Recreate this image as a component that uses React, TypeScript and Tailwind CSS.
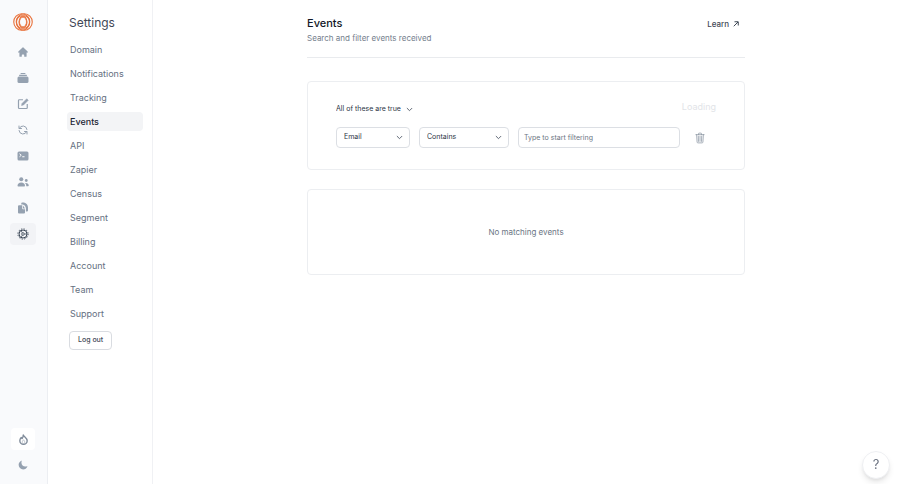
import React, { useState } from 'react';
import { HiHome, HiOutlineRefresh } from 'react-icons/hi';
import { IoMoon, IoTrashOutline } from 'react-icons/io5';
import clsx from 'clsx';

type IconProps = { className?: string };

function StackIcon({ className }: IconProps) {
  return (
    <svg viewBox="0 0 24 24" className={className} fill="currentColor" aria-hidden="true">
      <rect x="7" y="2" width="10" height="2" rx="1" />
      <rect x="4" y="5.5" width="16" height="2.4" rx="1.2" />
      <path d="M4 9h16a3 3 0 0 1 3 3v7a3 3 0 0 1-3 3H4a3 3 0 0 1-3-3v-7a3 3 0 0 1 3-3z" />
    </svg>
  );
}

function EditIcon({ className }: IconProps) {
  return (
    <svg viewBox="0 0 24 24" className={className} fill="none" stroke="currentColor" strokeWidth="2.4" strokeLinejoin="round" aria-hidden="true">
      <path d="M12 3.5H4.5A1.5 1.5 0 0 0 3 5v14.5A1.5 1.5 0 0 0 4.5 21H19a1.5 1.5 0 0 0 1.5-1.5V12" />
      <path d="M9 15l1-4 9.5-9.5 3 3L13 14z" fill="currentColor" strokeWidth="1" />
    </svg>
  );
}

function TerminalIcon({ className }: IconProps) {
  return (
    <svg viewBox="0 0 24 24" className={className} aria-hidden="true">
      <rect x="1" y="3" width="22" height="18" rx="3" fill="currentColor" />
      <path d="M5 7.5l3.5 3L5 13.5M10.5 13.5H15" fill="none" stroke="#fff" strokeWidth="2" />
    </svg>
  );
}

function PeopleIcon({ className }: IconProps) {
  return (
    <svg viewBox="0 0 24 24" className={className} fill="currentColor" aria-hidden="true">
      <circle cx="8.5" cy="6.5" r="4" />
      <path d="M1 19.5C1 15.5 4 13 8.5 13s7.5 2.5 7.5 6.5c0 1-.6 1.5-1.5 1.5h-12C1.6 21 1 20.500 1 19.500z" />
      <circle cx="18.5" cy="9" r="2.8" />
      <path d="M16 14.200c4-.9 7.500 1.300 7.500 5 0 1-.6 1.300-1.300 1.300H18.500c.2-2.600-.7-4.800-2.500-6.300z" />
    </svg>
  );
}

function PagesIcon({ className }: IconProps) {
  return (
    <svg viewBox="0 0 24 24" className={className} fill="currentColor" aria-hidden="true">
      <path d="M4 6.5h6.5V13a1.5 1.5 0 0 0 1.5 1.5h4V21a2 2 0 0 1-2 2H4a2 2 0 0 1-2-2V8.5a2 2 0 0 1 2-2z" />
      <path d="M12 7l4 5.8h-4z" />
      <path d="M8.5 4.8V3a2 2 0 0 1 2-2H14c5 1 8 5 8 10v6a2 2 0 0 1-2 2h-2.2v-6.5c-.3-4-2.8-7-6.3-7.7z" />
    </svg>
  );
}

function GearIcon({ className }: IconProps) {
  return (
    <svg viewBox="0 0 24 24" className={className} fill="none" stroke="currentColor" aria-hidden="true">
      <circle cx="12" cy="12" r="8" strokeWidth="2" />
      <circle cx="12" cy="12" r="10.2" strokeWidth="2" strokeDasharray="2.6 2.74" />
      <circle cx="12" cy="12" r="2.6" strokeWidth="1.6" />
      <path d="M14.6 12H20M10.7 9.8 8 5.1M10.7 14.2 8 18.9" strokeWidth="1.4" />
    </svg>
  );
}

function FlameIcon({ className }: IconProps) {
  return (
    <svg viewBox="0 0 24 24" className={className} fill="none" stroke="currentColor" strokeWidth="3" strokeLinejoin="round" aria-hidden="true">
      <path d="M11.5 2c1 4 8.5 6.5 8.5 12.5a8 8 0 0 1-16 0C4 11 5.5 9 7 7.5L9 10c1.5-2 2.5-5 2.5-8z" />
      <path d="M12 12.5c1.8 2.2 3 3.5 3 5.5a3 3 0 0 1-6 0c0-2 1.2-3.3 3-5.5z" strokeWidth="1" />
    </svg>
  );
}

function Chevron({ className }: IconProps) {
  return (
    <svg viewBox="0 0 12 12" className={className} fill="none" stroke="#4b5563" strokeWidth="1.5" strokeLinecap="round" strokeLinejoin="round" aria-hidden="true">
      <path d="M2 4l4 4 4-4" />
    </svg>
  );
}

const NAV = [
  { label: 'Home', icon: HiHome },
  { label: 'Collections', icon: StackIcon },
  { label: 'Compose', icon: EditIcon },
  { label: 'Loops', icon: HiOutlineRefresh },
  { label: 'Transactional', icon: TerminalIcon },
  { label: 'Audience', icon: PeopleIcon },
  { label: 'Forms', icon: PagesIcon },
  { label: 'Settings', icon: GearIcon },
];

const SETTINGS = [
  'Domain', 'Notifications', 'Tracking', 'Events', 'API', 'Zapier',
  'Census', 'Segment', 'Billing', 'Account', 'Team', 'Support',
];

function Logo() {
  return (
    <svg viewBox="0 0 40 36" className="w-5 h-[18px]" fill="none" stroke="#e8703a" strokeWidth="2.2" aria-hidden="true">
      <ellipse cx="17.5" cy="18" rx="16" ry="16.4" />
      <ellipse cx="22.5" cy="18" rx="16" ry="16.4" />
      <ellipse cx="17.5" cy="18" rx="10.5" ry="12.5" />
      <ellipse cx="22.5" cy="18" rx="10.5" ry="12.5" />
      <ellipse cx="20" cy="18" rx="7" ry="9.5" strokeWidth="1.6" />
    </svg>
  );
}

function IconRail() {
  return (
    <aside className="w-12 shrink-0 flex flex-col items-center bg-[#f9fafc] border-r border-[#eceef2] pt-[13px] pr-px pb-2">
      <a href="#dashboard" aria-label="Dashboard"><Logo /></a>
      <nav className="mt-[10px] flex flex-col gap-1">
        {NAV.map(({ label, icon: Icon }) => (
          <a
            key={label}
            href={`#${label.toLowerCase()}`}
            aria-label={label}
            className={clsx(
              'w-[26px] h-[22px] flex items-center justify-center rounded',
              label === 'Settings' ? 'bg-[#f2f3f6] text-[#3b4757]' : 'text-[#95a1b0]',
            )}
          >
            <Icon className="size-3" />
          </a>
        ))}
      </nav>
      <div className="mt-auto flex flex-col items-center gap-1">
        <button aria-label="What's new" className="w-6 h-[22px] flex items-center justify-center rounded bg-white text-[#7f8b9a]">
          <FlameIcon className="size-[11px]" />
        </button>
        <button aria-label="Dark mode" className="w-6 h-[22px] flex items-center justify-center rounded text-[#95a1b0]">
          <IoMoon className="size-[10px]" />
        </button>
      </div>
    </aside>
  );
}

function SettingsMenu() {
  return (
    <div className="w-[105px] shrink-0 border-r border-[#f0f1f4] pt-[13px]">
      <h2 className="pl-[21px] text-[12px] leading-5 text-[#3f4856]">Settings</h2>
      <nav className="mt-[7px] ml-[19px] mr-[9px] flex flex-col gap-[5px]">
        {SETTINGS.map((item) => (
          <a
            key={item}
            href={`#${item.toLowerCase()}`}
            className={clsx(
              'h-[19px] flex items-center rounded pl-[3px] text-[9px]',
              item === 'Events' ? 'bg-[#f3f4f6] font-medium text-[#1b2433]' : 'text-[#657081]',
            )}
          >
            {item}
          </a>
        ))}
      </nav>
      <button className="mt-2 ml-[21px] h-[19px] px-2 rounded border border-[#d9dce1] text-[7px] font-medium text-[#3f4856]">
        Log out
      </button>
    </div>
  );
}

function Select({ label, options, className }: { label: string; options: string[]; className: string }) {
  return (
    <div className={clsx('relative shrink-0', className)}>
      <select
        aria-label={label}
        className="block w-full h-[21px] appearance-none rounded border border-[#dcdfe4] bg-white pl-[7px] pr-4 text-[7px] text-[#2a3443]"
      >
        {options.map((o) => <option key={o}>{o}</option>)}
      </select>
      <Chevron className="absolute right-[7px] top-[7px] size-[7px] pointer-events-none" />
    </div>
  );
}

function FilterCard() {
  const [query, setQuery] = useState('');
  return (
    <section className="mt-[23px] rounded border border-[#eceef1] px-7 pt-[19px] pb-[21px]">
      <div className="flex items-start justify-between">
        <div className="relative mt-[2px]">
          <select aria-label="Match mode" className="block h-3 appearance-none bg-transparent pr-3 text-[7px] leading-3 text-[#2a3443]">
            <option>All of these are true</option>
            <option>Any are true</option>
          </select>
          <Chevron className="absolute right-0 top-[3px] size-[7px] pointer-events-none" />
        </div>
        <span className="text-[9px] leading-3 text-[#e2e4e8]">Loading</span>
      </div>
      <div className="mt-3 flex items-center gap-[9px]">
        <Select label="Field" options={['Email', 'Event name']} className="w-[74px]" />
        <Select label="Operator" options={['Contains', 'Equals']} className="w-[90px]" />
        <input
          aria-label="Filter value"
          value={query}
          onChange={(e) => setQuery(e.target.value)}
          placeholder="Type to start filtering"
          className="min-w-0 flex-1 h-[21px] rounded border border-[#dcdfe4] px-[5px] text-[7px] text-[#2a3443] placeholder:text-[#6b7583]"
        />
        <button aria-label="Remove filter" className="w-[27px] h-[21px] flex items-center pl-[5px] text-[#8b95a3]">
          <IoTrashOutline className="size-3" />
        </button>
      </div>
    </section>
  );
}

export default function App() {
  return (
    <div className="min-h-screen flex bg-white font-['Inter',sans-serif]">
      <IconRail />
      <SettingsMenu />
      <main className="flex-1 pl-6 pr-[25px]">
        <div className="max-w-[438px] mx-auto">
          <header className="flex items-start justify-between border-b border-[#e9ebee] pt-[15px] pb-3">
            <div>
              <h1 className="text-[11px] leading-4 font-medium text-[#111827]">Events</h1>
              <p className="text-[8px] leading-[14px] text-[#747e8c]">Search and filter events received</p>
            </div>
            <a href="#learn" className="mt-[3px] mr-[6px] flex items-center gap-1 text-[8px] leading-3 font-medium text-[#3f4856]">
              Learn
              <svg viewBox="0 0 12 12" className="size-[6px]" fill="none" stroke="currentColor" strokeWidth="2" aria-hidden="true">
                <path d="M1.5 10.5 10 2M3 1.5h7.5V9" />
              </svg>
            </a>
          </header>
          <FilterCard />
          <section className="mt-[19px] rounded border border-[#eceef1] py-[35px] text-center text-[8px] leading-[14px] text-[#6b7583]">
            No matching events
          </section>
        </div>
      </main>
      <button
        aria-label="Help"
        className="fixed right-[10px] bottom-[5px] size-7 rounded-full bg-white border border-[#eeeff2] shadow-md text-[13px] text-[#6b7280]"
      >
        ?
      </button>
    </div>
  );
}
